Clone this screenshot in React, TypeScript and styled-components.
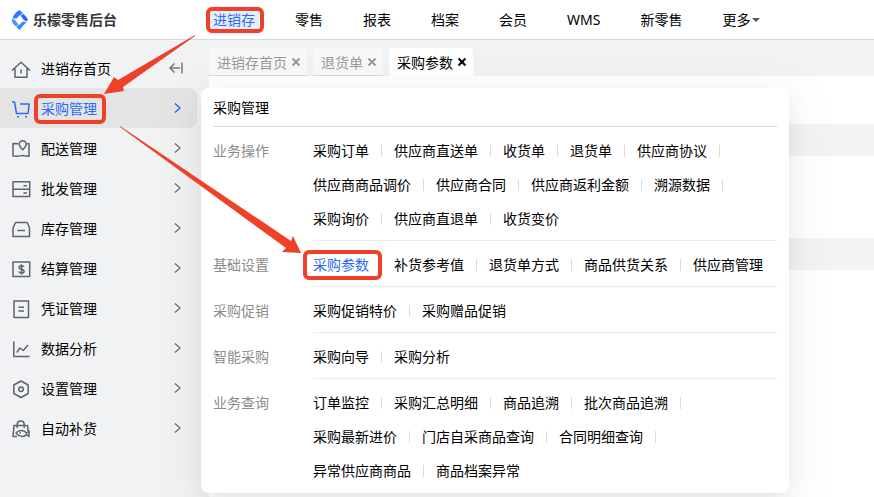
import React from "react";
import styled, { createGlobalStyle, css } from "styled-components";

const GlobalStyle = createGlobalStyle`
  * { box-sizing: border-box; }
  html, body, #root { height: 100%; }
  body {
    margin: 0;
    overflow: hidden;
    background: #f1f2f4;
    color: #000;
    font: 14px/20px "Noto Sans", "Noto Sans CJK SC", sans-serif;
  }
  button { font: inherit; color: inherit; border: 0; padding: 0; background: none; cursor: pointer; }
  a { color: inherit; text-decoration: none; }
  ul { list-style: none; margin: 0; padding: 0; }
  h2, h3 { margin: 0; font: inherit; }
`;

const BLUE = "#2b6cf6";
const RED = "#ee4128";

const Page = styled.div`
  position: relative;
  display: flex;
  flex-direction: column;
  min-height: 100vh;
`;

const Header = styled.header`
  position: relative;
  z-index: 2;
  display: flex;
  align-items: center;
  height: 40px;
  background: #fff;
  border-bottom: 1px solid #d9dadb;
`;

const Brand = styled.a`
  display: flex;
  align-items: center;
  gap: 4px;
  width: 213px;
  padding-left: 10px;
  font-weight: 700;
  color: #36383c;
`;

const TopNav = styled.nav`
  display: flex;
  align-items: center;
  gap: 40px;
`;

const marker = (inset: string) => css`
  &::after {
    content: "";
    position: absolute;
    inset: ${inset};
    border: 4px solid ${RED};
    border-radius: 6px;
    pointer-events: none;
  }
`;

const NavItem = styled.a<{ $active?: boolean }>`
  position: relative;
  display: flex;
  align-items: center;
  gap: 2px;
  white-space: nowrap;
  ${(p) =>
    p.$active &&
    css`
      color: ${BLUE};
      background: #e6edfd;
      box-shadow: 0 0 0 4px #e6edfd;
      ${marker("-3px -9px -3px -7px")}
    `}
`;

const Caret = styled.span`
  border: 4px solid transparent;
  border-top-color: #555;
  border-bottom: 0;
`;

const Body = styled.div`
  position: relative;
  flex: 1;
  display: flex;
`;

const Sidebar = styled.nav`
  flex: 0 0 209px;
  padding: 8px 12px 0 0;
  background: #f1f2f4;
`;

const SideItem = styled.a<{ $active?: boolean }>`
  display: flex;
  align-items: center;
  gap: 10px;
  height: 40px;
  padding: 2px 14px 0 11px;
  border-radius: 0 8px 8px 0;
  color: ${(p) => (p.$active ? BLUE : "#000")};
  background: ${(p) => (p.$active ? "#e4e4e4" : "transparent")};
`;

const SideLabel = styled.span<{ $marked?: boolean }>`
  position: relative;
  margin-right: auto;
  ${(p) => p.$marked && marker("-5px -9px -5px -7px")}
`;

const Glyph = styled.svg<{ $size: number; $color?: string }>`
  flex: none;
  width: ${(p) => p.$size}px;
  height: ${(p) => p.$size}px;
  fill: none;
  stroke: ${(p) => p.$color || "currentColor"};
  stroke-width: 1.5;
  stroke-linejoin: round;
`;

const Workspace = styled.main`
  flex: 1;
  display: flex;
  flex-direction: column;
  min-width: 0;
`;

const Tabs = styled.div`
  display: flex;
  gap: 6px;
  padding-top: 8px;
`;

const Tab = styled.div<{ $active?: boolean }>`
  display: flex;
  align-items: center;
  gap: 4px;
  height: 28px;
  padding: 2px 6px 0 8px;
  border-radius: 4px 4px 0 0;
  white-space: nowrap;
  color: ${(p) => (p.$active ? "#000" : "#999")};
  background: ${(p) => (p.$active ? "#fff" : "#f8f8f8")};
  box-shadow: ${(p) => (p.$active ? "none" : "inset 0 -1px #d7d8da")};
`;

const CloseButton = styled.button`
  display: flex;
  padding-bottom: 2px;
`;

const Sheet = styled.div`
  flex: 1;
  padding-top: 48px;
  background: #fff;
`;

const Band = styled.div`
  height: 32px;
  margin-bottom: 82px;
  background: #f2f3f5;
`;

const Flyout = styled.section`
  position: absolute;
  z-index: 1;
  top: 48px;
  left: 201px;
  width: 588px;
  padding: 0 12px;
  border-radius: 8px;
  background: #fff;
  box-shadow: 0 6px 16px -8px rgba(0, 0, 0, 0.08), 0 9px 28px rgba(0, 0, 0, 0.05),
    0 12px 48px 16px rgba(0, 0, 0, 0.03);
`;

const FlyoutTitle = styled.h2`
  padding-top: 2px;
  line-height: 36px;
  border-bottom: 1px solid #d9d9d9;
`;

const Group = styled.div`
  display: grid;
  grid-template-columns: 100px 1fr;
  line-height: 34px;
`;

const GroupName = styled.h3`
  padding-top: 7px;
  color: #8c8c8c;
`;

const LinkList = styled.ul<{ $last: boolean }>`
  display: flex;
  flex-wrap: wrap;
  padding: 7px 0 4px;
  border-bottom: 1px solid ${(p) => (p.$last ? "transparent" : "#ececec")};
`;

const LinkItem = styled.li`
  display: flex;
  align-items: center;
  white-space: nowrap;
  &:not(:last-child)::after {
    content: "";
    width: 1px;
    height: 12px;
    margin: 0 12px;
    background: #dcdcdc;
  }
`;

const MenuLink = styled.a<{ $active?: boolean }>`
  position: relative;
  color: ${(p) => (p.$active ? BLUE : "#000")};
  ${(p) => p.$active && marker("2px -13px 2px -10px")}
`;

const Arrows = styled.svg`
  position: absolute;
  z-index: 3;
  top: 0;
  left: 0;
  width: 320px;
  height: 270px;
  fill: ${RED};
  pointer-events: none;
`;

const ICONS: Record<string, React.ReactNode> = {
  home: <path d="M1 11.500 10 3.200l9 8.300M4 9.500v8.700h12V9.500M10 10.500v4" />,
  cart: <path d="M1 3h2.500l2 11.500H17L18.200 5H9M6 17.800h2M14 17.800h2" />,
  map: (
    <>
      <path d="M7.300 4.800 2 4.500v12.500l4.500.3c2.500-.3 4-1.300 6.500-.6l5 .6V4.800l-2-.3" />
      <path d="M11.700 10.800C9.500 8.500 8.200 7 8.200 5.200a3.500 3.500 0 0 1 7 0c0 1.800-1.300 3.300-3.500 5.600z" />
    </>
  ),
  drawers: <path d="M2 2.800h16.700v14.700H2zM2 10.200h16.700M12.500 6.700H16M12.500 14H16" />,
  box: <path d="M4.500 3.500h11.700L18.500 9v8.500H2V9zM6.500 11.500h7.500" />,
  money: (
    <>
      <path d="M2 3h16.700v14.500H2z" />
      <path d="M13 8c-.5-1-1.400-1.300-2.500-1.300-1.500 0-2.400.6-2.400 1.700 0 2.700 5 1.200 5 3.800 0 1.200-1 1.800-2.600 1.800-1.300 0-2.300-.5-2.700-1.500M10.500 5.200v10.300" />
    </>
  ),
  doc: <path d="M3 2h14.500v16.500H3zM7.500 8.200H13M7.500 12H13" />,
  chart: <path d="M2.800 2.500v15H18.500M5.800 13.500l3-4.500 3.500 2.500L17 6" />,
  gear: (
    <>
      <path d="m10 2 7.200 4v8.500l-7.200 4-7.200-4V6z" />
      <circle cx="10" cy="10.200" r="2.300" />
    </>
  ),
  bag: (
    <>
      <path d="M6 17.500H2L3 6.500h13.500l.8 6M6.200 9V5.500c0-4.700 7-4.700 7 0V9" />
      <path d="M5 14c3-3.500 8-3.500 10.500 0l2.500-2v5.500l-2.500-2C13 18.500 8 18 5 14zM8.500 14h1.500" />
    </>
  ),
};

const SIDE = [
  ["home", "进销存首页"],
  ["cart", "采购管理"],
  ["map", "配送管理"],
  ["drawers", "批发管理"],
  ["box", "库存管理"],
  ["money", "结算管理"],
  ["doc", "凭证管理"],
  ["chart", "数据分析"],
  ["gear", "设置管理"],
  ["bag", "自动补货"],
];

const NAV = ["进销存", "零售", "报表", "档案", "会员", "WMS", "新零售", "更多"];
const TABS = ["进销存首页", "退货单", "采购参数"];

const GROUPS: [string, string[]][] = [
  [
    "业务操作",
    ["采购订单", "供应商直送单", "收货单", "退货单", "供应商协议", "供应商商品调价", "供应商合同", "供应商返利金额", "溯源数据", "采购询价", "供应商直退单", "收货变价"],
  ],
  ["基础设置", ["采购参数", "补货参考值", "退货单方式", "商品供货关系", "供应商管理"]],
  ["采购促销", ["采购促销特价", "采购赠品促销"]],
  ["智能采购", ["采购向导", "采购分析"]],
  [
    "业务查询",
    ["订单监控", "采购汇总明细", "商品追溯", "批次商品追溯", "采购最新进价", "门店自采商品查询", "合同明细查询", "异常供应商商品", "商品档案异常"],
  ],
];

function Logo() {
  return (
    <svg width="19" height="20" viewBox="0 0 19 20" aria-hidden="true">
      <path d="M9.500 0C9 3.500 6 6.500 2.500 8.500 3.500 4.500 6 2 9.500 0z" fill="#2f7bf5" />
      <path d="M9.500 0 13 3.200 9.500 5.500 6.500 8.500 2.500 8.500z" fill="#2f7bf5" />
      <path d="M13.500 4 16 6.500c2 2.500 2 4 .8 5L13.800 10 10.500 5.500z" fill="#1f6cf0" />
      <path d="M2 9 5.200 10 8.500 14.800 5.500 16.200 3 13.500C1.500 11.500 1.500 10.500 2 9z" fill="#4a95fa" />
      <path d="M9.500 20 6 16.800 9.500 14.500 12.800 11.500 16.500 12z" fill="#3b8af8" />
    </svg>
  );
}

export default function App() {
  return (
    <Page>
      <GlobalStyle />
      <Header>
        <Brand href="#">
          <Logo />
          乐檬零售后台
        </Brand>
        <TopNav aria-label="主导航">
          {NAV.map((name, i) => (
            <NavItem key={name} href="#" $active={i === 0}>
              {name}
              {name === "更多" && <Caret />}
            </NavItem>
          ))}
        </TopNav>
      </Header>
      <Body>
        <Sidebar aria-label="侧边菜单">
          {SIDE.map(([icon, name], i) => (
            <SideItem key={name} href="#" $active={i === 1}>
              <Glyph $size={20} $color={i === 1 ? BLUE : "#5f6270"} viewBox="0 0 20 20">
                {ICONS[icon]}
              </Glyph>
              <SideLabel $marked={i === 1}>{name}</SideLabel>
              {i === 0 ? (
                <Glyph $size={14} $color="#777" viewBox="0 0 14 14">
                  <path d="M13 .5v11M11 6H1M5.500 1.500 1 6l4.500 4.500" />
                </Glyph>
              ) : (
                <Glyph $size={12} $color={i === 1 ? BLUE : "#777"} viewBox="0 0 12 12">
                  <path d="m4 .5 5 4.500L4 9.500" />
                </Glyph>
              )}
            </SideItem>
          ))}
        </Sidebar>
        <Workspace>
          <Tabs>
            {TABS.map((name, i) => (
              <Tab key={name} $active={i === 2}>
                {name}
                <CloseButton aria-label={"关闭" + name}>
                  <Glyph $size={10} viewBox="0 0 10 10">
                    <path d="m1.500 1.500 7 7M8.500 1.500l-7 7" strokeWidth="2" />
                  </Glyph>
                </CloseButton>
              </Tab>
            ))}
          </Tabs>
          <Sheet>
            <Band />
            <Band />
          </Sheet>
        </Workspace>
        <Flyout>
          <FlyoutTitle>采购管理</FlyoutTitle>
          {GROUPS.map(([name, links], g) => (
            <Group key={name}>
              <GroupName>{name}</GroupName>
              <LinkList $last={g === GROUPS.length - 1}>
                {links.map((link) => (
                  <LinkItem key={link}>
                    <MenuLink href="#" $active={link === "采购参数"}>
                      {link}
                    </MenuLink>
                  </LinkItem>
                ))}
              </LinkList>
            </Group>
          ))}
        </Flyout>
      </Body>
      <Arrows viewBox="0 0 320 270" aria-hidden="true">
        <path d="M195 35 118 80 114 77 104 94 124 91 123 87 195 36z" />
        <path d="M120 126 291 241 293 236 301 253 282 252 286 248 120 127z" />
      </Arrows>
    </Page>
  );
}
